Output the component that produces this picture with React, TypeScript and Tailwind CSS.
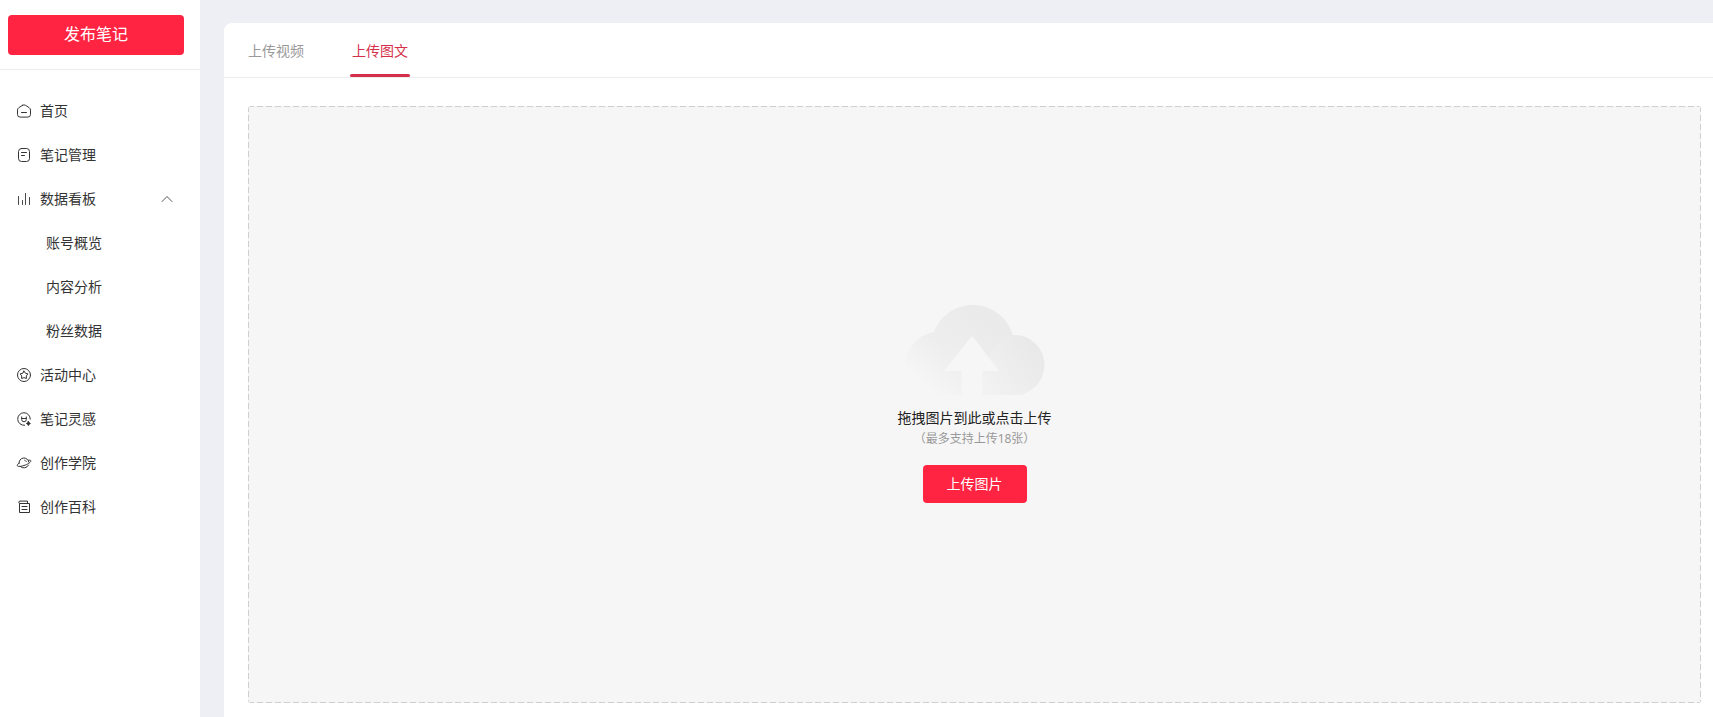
import type { ReactNode } from "react";

function Icon({ children }: { children: ReactNode }) {
  return (
    <svg
      viewBox="0 0 16 16"
      className="size-4 shrink-0"
      fill="none"
      stroke="currentColor"
      strokeWidth="1"
      strokeLinecap="round"
      strokeLinejoin="round"
      aria-hidden="true"
    >
      {children}
    </svg>
  );
}

const icons = {
  home: (
    <Icon>
      <path d="M6.500 2.300 2.800 4.700A2.900 2.900 0 0 0 1.500 7.100v4.400a2.600 2.600 0 0 0 2.600 2.600h7.800a2.600 2.600 0 0 0 2.600-2.600V7.100a2.900 2.900 0 0 0-1.300-2.400L9.500 2.300a2.800 2.800 0 0 0-3 0Z" />
      <path d="M5.500 9.500h5" />
    </Icon>
  ),
  note: (
    <Icon>
      <rect x="2.500" y="1.500" width="11" height="13" rx="3" />
      <path d="M5.500 5.500h5M5.500 8.500h3" />
    </Icon>
  ),
  chart: (
    <Icon>
      <path d="M2.500 5.500v8M6.500 9.500v4M9.500 2.500v11M13.500 6.500v7" strokeWidth="0.9" />
    </Icon>
  ),
  star: (
    <Icon>
      <circle cx="8" cy="8" r="6.500" />
      <path d="m8 4.100 1.400 2.100 2.500.7-1.600 2 .1 2.600L8 10.600l-2.400.9.100-2.600-1.600-2 2.500-.7Z" />
    </Icon>
  ),
  idea: (
    <Icon>
      <path d="M14.300 8.200A6.300 6.300 0 1 0 8.600 14.300" />
      <path d="M5.700 5.900v2.600a2.300 2.300 0 0 0 4.600 0V5.900M5.700 7.500h4.600" />
      <path d="m12.400 10.500.7 1.300 1.300.7-1.300.7-.7 1.300-.7-1.300-1.300-.7 1.300-.7Z" fill="currentColor" />
    </Icon>
  ),
  planet: (
    <Icon>
      <path d="M3 8.600a5 5 0 0 1 9.900-1.400" />
      <path d="M4.400 11.600a5 5 0 0 0 8.100-1.500" />
      <path d="M3 8.100C1.700 9.200 1 10.200 1.300 10.800c.8 1.200 4.400.6 7.900-.7s6-3.300 5.600-4.400c-.2-.6-1.100-.7-2.400-.5" />
      <path d="M8.600 5.200a2.800 2.800 0 0 1 1.900 1.500" strokeWidth="0.8" />
    </Icon>
  ),
  book: (
    <Icon>
      <path d="M3.500 5v8.500h10V4.500H4a1.200 1.200 0 0 1 0-2.400h7.500v2.400" />
      <path d="M6 7.500h5M6 10.500h5" />
    </Icon>
  ),
};

type Item = { label: string; icon: ReactNode; children?: string[] };

const items: Item[] = [
  { label: "首页", icon: icons.home },
  { label: "笔记管理", icon: icons.note },
  { label: "数据看板", icon: icons.chart, children: ["账号概览", "内容分析", "粉丝数据"] },
  { label: "活动中心", icon: icons.star },
  { label: "笔记灵感", icon: icons.idea },
  { label: "创作学院", icon: icons.planet },
  { label: "创作百科", icon: icons.book },
];

function Sidebar() {
  return (
    <aside className="w-[200px] shrink-0 bg-white">
      <div className="border-b border-[#ececee] pt-[15px] pr-4 pb-3.5 pl-2">
        <button className="h-10 w-full rounded bg-[#ff2442] pb-0.5 text-base text-white">发布笔记</button>
      </div>
      <nav className="pt-[19px]">
        <ul>
          {items.map((item) => (
            <li key={item.label}>
              {item.children ? (
                <>
                  <button aria-expanded="true" className="flex h-11 w-full items-center gap-2 pr-[27px] pl-4">
                    {item.icon}
                    <span>{item.label}</span>
                    <svg
                      viewBox="0 0 12 8"
                      className="ml-auto h-2 w-3"
                      fill="none"
                      stroke="#555"
                      strokeWidth="1"
                      aria-hidden="true"
                    >
                      <path d="M.8 6.800 6 1.500l5.200 5.300" />
                    </svg>
                  </button>
                  <ul>
                    {item.children.map((child) => (
                      <li key={child}>
                        <a href="#" className="flex h-11 items-center pl-[46px]">
                          {child}
                        </a>
                      </li>
                    ))}
                  </ul>
                </>
              ) : (
                <a href="#" className="flex h-11 items-center gap-2 pl-4">
                  {item.icon}
                  <span>{item.label}</span>
                </a>
              )}
            </li>
          ))}
        </ul>
      </nav>
    </aside>
  );
}

function CloudUpload() {
  return (
    <svg viewBox="0 0 144 92" className="h-[92px] w-36" aria-hidden="true">
      <defs>
        <linearGradient id="cloud-body" gradientUnits="userSpaceOnUse" x1="82" y1="14" x2="24" y2="84">
          <stop offset="0" stopColor="#eaeaea" />
          <stop offset="0.55" stopColor="#eeeeee" />
          <stop offset="1" stopColor="#f6f6f6" />
        </linearGradient>
        <linearGradient id="cloud-lobe" gradientUnits="userSpaceOnUse" x1="134" y1="50" x2="86" y2="88">
          <stop offset="0" stopColor="#e9e9e9" />
          <stop offset="1" stopColor="#f2f2f2" />
        </linearGradient>
      </defs>
      <path
        d="M31 28a41.500 41.500 0 0 1 79 4L100 91H34C16 91 3 77 3 60 3 44 15 31 31 28Z"
        fill="url(#cloud-body)"
      />
      <path d="M100 33.500q5-2.500 11.500-2.500a30 30 0 0 1 14 56.500q-5 3.500-12 3.500H79V60Z" fill="url(#cloud-lobe)" />
      <path
        d="M70.500 33.500 95 65.500a1 1 0 0 1-.8 1.600H79.500V92h-21V67.100H42.800a1 1 0 0 1-.8-1.600L67.500 33.500a2 2 0 0 1 3 0Z"
        fill="#f6f6f6"
      />
    </svg>
  );
}

function Dropzone() {
  return (
    <div className="flex flex-1 flex-col items-center justify-center rounded-[3px] bg-[#f6f6f6] bg-[image:repeating-linear-gradient(90deg,#cfcfcf_0_6px,#f3f3f3_6px_9px),repeating-linear-gradient(90deg,#cfcfcf_0_6px,#f3f3f3_6px_9px),repeating-linear-gradient(180deg,#cfcfcf_0_6px,#f3f3f3_6px_9px),repeating-linear-gradient(180deg,#cfcfcf_0_6px,#f3f3f3_6px_9px)] bg-[length:100%_1px,100%_1px,1px_100%,1px_100%] bg-[position:0_0,0_100%,0_0,100%_0] bg-no-repeat pb-0.5">
      <CloudUpload />
      <p className="mt-[11px] leading-[22px] text-[#222]">拖拽图片到此或点击上传</p>
      <p className="text-xs leading-5 text-[#999]">（最多支持上传18张）</p>
      <button className="mt-4 h-[38px] w-[104px] rounded bg-[#ff2442] text-white">上传图片</button>
    </div>
  );
}

export default function App() {
  return (
    <div className="flex min-h-screen bg-[#eeeff5] font-['Noto_Sans','Noto_Sans_CJK_SC',sans-serif] text-sm text-[#333]">
      <Sidebar />
      <main className="flex min-w-0 flex-1 flex-col pt-[23px] pl-6">
        <div className="flex flex-1 flex-col rounded-tl-lg bg-white">
          <div role="tablist" className="flex h-[55px] gap-11 border-b border-[#ececee] pl-[22px]">
            <button role="tab" aria-selected="false" className="px-0.5 pt-0.5 text-[#999]">
              上传视频
            </button>
            <button role="tab" aria-selected="true" className="relative px-0.5 pt-0.5 text-[#d5304a]">
              上传图文
              <span className="absolute inset-x-0 bottom-0 h-[3px] rounded-full bg-[#d5304a]" />
            </button>
          </div>
          <section className="flex flex-1 flex-col pt-7 pr-3 pb-3.5 pl-6">
            <Dropzone />
          </section>
        </div>
      </main>
    </div>
  );
}
